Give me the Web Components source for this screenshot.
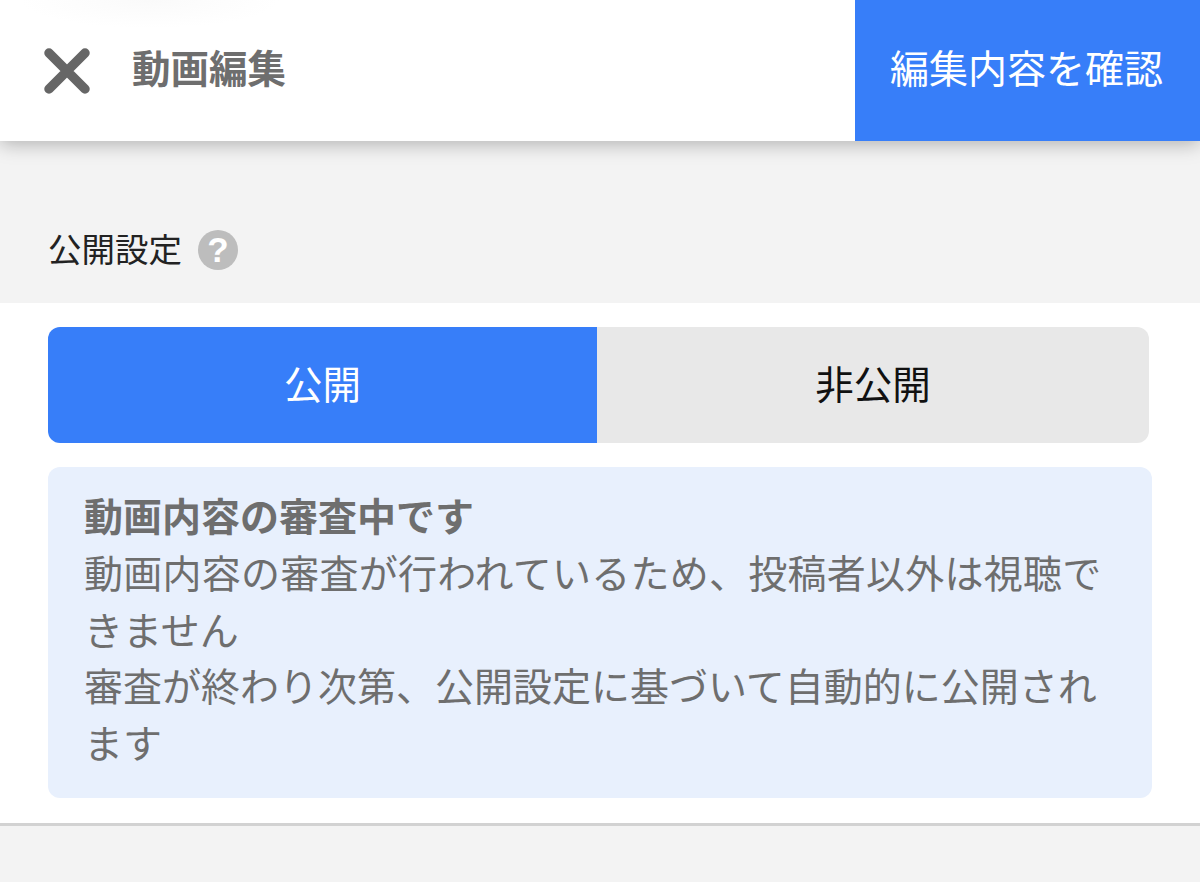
<!DOCTYPE html>
<html lang="ja">
<head>
<meta charset="utf-8">
<title>動画編集</title>
<style>
  html, body { margin: 0; height: 100%; }
  body {
    background: #f3f3f3;
    font-family: "Noto Sans CJK JP", "Noto Sans", sans-serif;
    overflow: hidden;
  }
  .wide { letter-spacing: .25px; }
</style>
</head>
<body>
<edit-header heading="動画編集" action="編集内容を確認"></edit-header>
<section-label>公開設定</section-label>
<setting-panel>
  <visibility-toggle on="公開" off="非公開"></visibility-toggle>
  <notice-box heading="動画内容の審査中です">
    <span class="wide">動画内容の審査が行われているため、投稿者以外は視聴で</span><br>きません<br>審査が終わり次第、公開設定に基づいて自動的に公開され<br>ます
  </notice-box>
</setting-panel>

<script>
/**
 * Top bar with close icon, title and confirm button.
 */
customElements.define('edit-header',
  class extends HTMLElement {
    constructor () {
      super()
      this.attachShadow({ mode: 'open' }).innerHTML = `
        <style>
          :host {
            display: flex;
            height: 141px;
            background: radial-gradient(ellipse 130px 28px at 150px 0, #fafafa, #fff);
            box-shadow: 0 3px 18px rgba(0, 0, 0, .28);
            position: relative;
          }
          .close {
            width: 46px;
            height: 46px;
            margin: 48px 0 0 44px;
            flex: none;
          }
          h1 {
            margin: 0 0 0 42px;
            flex: 1;
            font-size: 38.5px;
            font-weight: 700;
            line-height: 132px;
            color: #6e6e6e;
          }
          .action {
            width: 345px;
            padding-right: 2px;
            box-sizing: border-box;
            background: #377ef9;
            color: #fff;
            font-size: 39px;
            line-height: 132px;
            text-align: center;
            white-space: nowrap;
          }
        </style>
        <svg class="close" viewBox="0 0 46 46">
          <path d="M5 5L41 41M41 5L5 41" stroke="#666" stroke-width="9.5" stroke-linecap="round" fill="none"/>
        </svg>
        <h1></h1>
        <div class="action"></div>
      `
      this.shadowRoot.querySelector('h1').textContent = this.getAttribute('heading')
      this.shadowRoot.querySelector('.action').textContent = this.getAttribute('action')
    }
  })

/**
 * Grey band with the section name and help icon.
 */
customElements.define('section-label',
  class extends HTMLElement {
    constructor () {
      super()
      this.attachShadow({ mode: 'open' }).innerHTML = `
        <style>
          :host {
            display: flex;
            align-items: center;
            gap: 16px;
            height: 162px;
            padding: 50px 0 0 48px;
            box-sizing: border-box;
            font-size: 33.5px;
            color: #222;
          }
          .help {
            width: 40px;
            height: 40px;
            margin-top: 6px;
            border-radius: 50%;
            background: #bdbdbd;
            color: #fff;
            font-family: "Liberation Sans", sans-serif;
            font-size: 35px;
            font-weight: 700;
            line-height: 40px;
            text-align: center;
          }
        </style>
        <slot></slot>
        <span class="help">?</span>
      `
    }
  })

/**
 * White panel that holds the setting controls.
 */
customElements.define('setting-panel',
  class extends HTMLElement {
    constructor () {
      super()
      this.attachShadow({ mode: 'open' }).innerHTML = `
        <style>
          :host {
            display: flex;
            flex-direction: column;
            gap: 24px;
            height: 523px;
            padding: 24px 48px 0;
            box-sizing: border-box;
            background: #fff;
            border-bottom: 3px solid #d2d2d2;
          }
        </style>
        <slot></slot>
      `
    }
  })

/**
 * Two part public / private switch.
 */
customElements.define('visibility-toggle',
  class extends HTMLElement {
    constructor () {
      super()
      this.attachShadow({ mode: 'open' }).innerHTML = `
        <style>
          :host {
            display: flex;
            width: 1101px;
            height: 116px;
            border-radius: 12px;
            overflow: hidden;
            font-size: 38.5px;
            line-height: 110px;
            text-align: center;
          }
          .on {
            width: 549px;
            background: #377ef9;
            color: #fff;
          }
          .off {
            flex: 1;
            background: #e8e8e8;
            color: #111;
          }
        </style>
        <div class="on"></div>
        <div class="off"></div>
      `
      this.shadowRoot.querySelector('.on').textContent = this.getAttribute('on')
      this.shadowRoot.querySelector('.off').textContent = this.getAttribute('off')
    }
  })

/**
 * Pale blue message box.
 */
customElements.define('notice-box',
  class extends HTMLElement {
    constructor () {
      super()
      this.attachShadow({ mode: 'open' }).innerHTML = `
        <style>
          :host {
            display: block;
            width: 1104px;
            height: 331px;
            padding: 19px 0 0 36px;
            box-sizing: border-box;
            border-radius: 12px;
            background: #e8f0fd;
            color: #6e6e6e;
            font-size: 39px;
            line-height: 56.8px;
            white-space: nowrap;
          }
          strong {
            display: block;
            font-weight: 700;
          }
        </style>
        <strong></strong>
        <slot></slot>
      `
      this.shadowRoot.querySelector('strong').textContent = this.getAttribute('heading')
    }
  })
</script>
</body>
</html>
